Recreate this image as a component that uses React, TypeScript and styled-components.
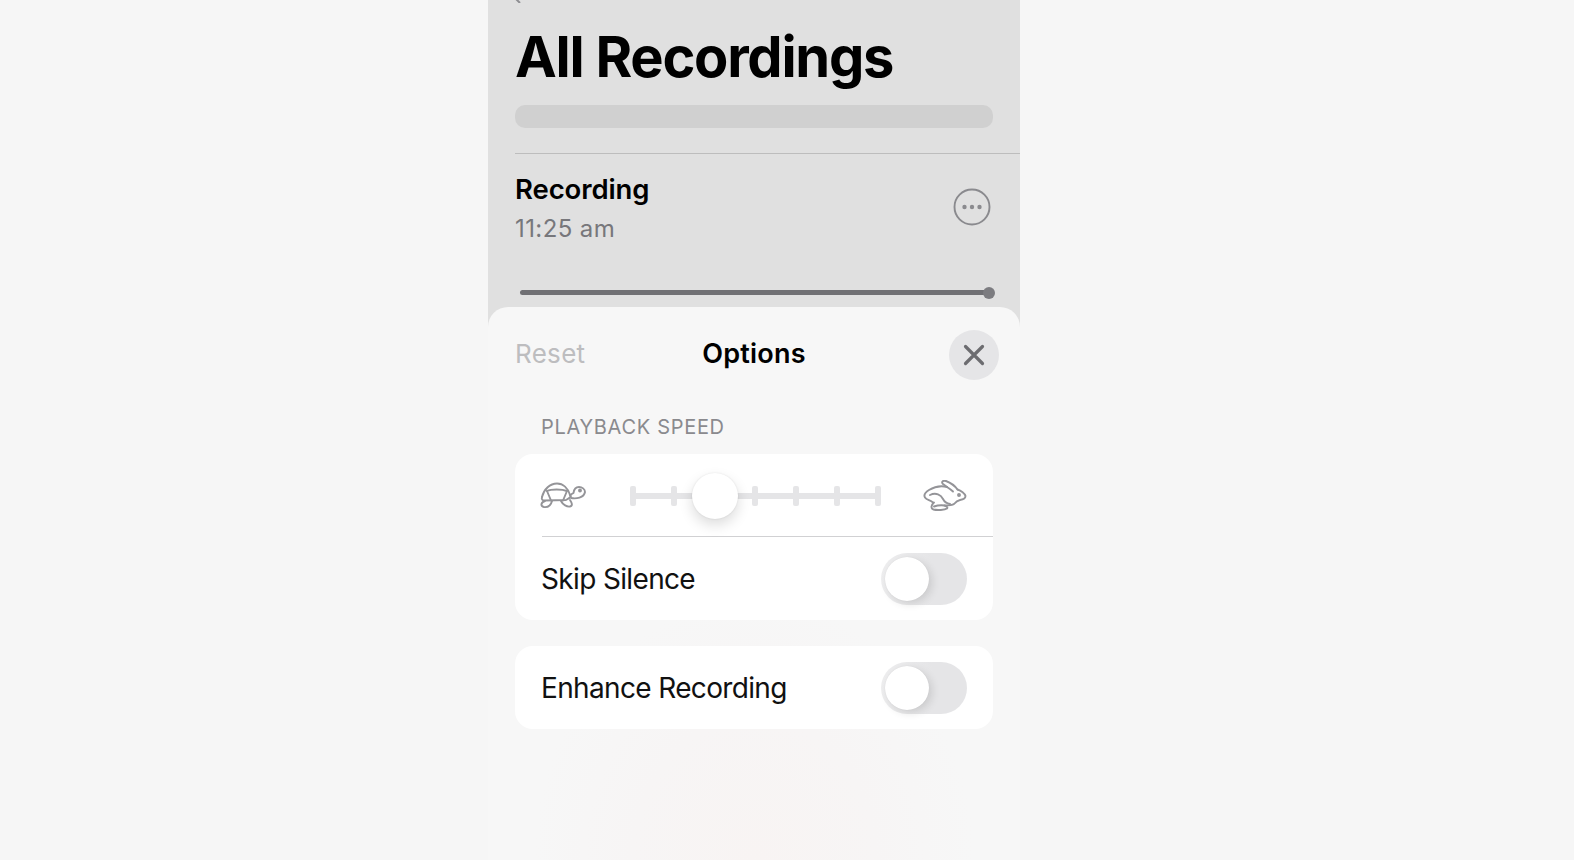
import styled, { createGlobalStyle } from 'styled-components'

const GlobalStyle = createGlobalStyle`
  html, body {
    margin: 0;
    padding: 0;
    background: #f6f6f6;
    font-family: Inter, "Liberation Sans", sans-serif;
  }
`

const TICKS = [0, 1, 2, 3, 4, 5, 6]

const Turtle = () => (
  <TurtleIcon width="48" height="27" viewBox="10 17 48 27" fill="none" stroke="#949498" strokeWidth="1.9" strokeLinecap="round" strokeLinejoin="round">
    <path d="M12 32C14 24 20 18.500 27 18.500c6 0 11 4.500 13 11.500" />
    <path d="M12 32c-1 3 1 3.500 3 3.500l21-.5c2-1 4-2 5-4" />
    <path d="M17 26c4-2 15-2 20 0" />
    <path d="M17 26l4 9.500M37 26l-4 9.500" />
    <path d="M41 33c5 1 13 0 14-6 0-3-3-5-6-5-3 0-5 2-5.500 6L40 30" />
    <circle cx="50" cy="25.500" r="1" fill="#949498" />
    <path d="M15 36c-4 1-5 5-1 6 4 .5 7-2 8-6" />
    <path d="M31 36c2 4 6 6 9 5.500 3-.5 2-3.500 0-6.500" />
  </TurtleIcon>
)

const Rabbit = () => (
  <RabbitIcon width="44" height="32" viewBox="13 16 44 32" fill="none" stroke="#949498" strokeWidth="1.9" strokeLinecap="round" strokeLinejoin="round">
    <path d="M37 23c-6-1.500-13 0-18 3-4 2.500-5.500 5-4 7.500 1.500 2.500 5 2.500 8 5" />
    <path d="M37 23l-4-3c-2-2 0-4 3-3 4 1.500 9 5 11.500 8.500" />
    <path d="M37 23c3 2 5 3.500 6 4.500" />
    <path d="M47.500 25.500c3.500 1 7.500 4 8 6.500 0 2.500-2.500 3.500-5.500 4-3 .5-4 1.500-6 4-2 1.500-6 1.500-9.500 1.500" />
    <path d="M20 31c6-3 11 0 13 4 1.500 3 4 4.500 7 5" />
    <path d="M24 38.500c-3 2.500-3.500 6-.5 7 3.500 1 11.500.5 13.500-1 1-1-.5-2.500-2.500-3-3.500-.5-7.500 0-10.500 1" />
    <circle cx="49" cy="31" r="1" fill="#949498" />
  </RabbitIcon>
)

const App = () => (
  <>
    <GlobalStyle />
    <Screen>
      <BackRow>
        <svg width="10" height="3" viewBox="0 0 10 3" fill="none" stroke="#8e8e92" strokeWidth="2">
          <path d="M6 -3L3 0l3 3" />
        </svg>
      </BackRow>
      <ListPane>
        <Title>All Recordings</Title>
        <SearchBar />
        <ListDivider />
        <RecordingRow>
          <div>
            <RecordingName>Recording</RecordingName>
            <RecordingTime>11:25 am</RecordingTime>
          </div>
          <MoreIcon width="38" height="38" viewBox="0 0 38 38" fill="none">
            <circle cx="19" cy="19" r="17.500" stroke="#8a8a8e" strokeWidth="1.900" />
            <circle cx="11.500" cy="19" r="2.200" fill="#8a8a8e" />
            <circle cx="19" cy="19" r="2.200" fill="#8a8a8e" />
            <circle cx="26.500" cy="19" r="2.200" fill="#8a8a8e" />
          </MoreIcon>
        </RecordingRow>
        <Progress>
          <ProgressKnob />
        </Progress>
      </ListPane>
      <Sheet>
        <SheetHeader>
          <ResetLabel>Reset</ResetLabel>
          <SheetTitle>Options</SheetTitle>
          <CloseButton aria-label="Close">
            <svg width="22" height="22" viewBox="0 0 22 22" fill="none" stroke="#6c6c70" strokeWidth="3.200" strokeLinecap="round">
              <path d="M2.500 2.500l17 17M19.500 2.500l-17 17" />
            </svg>
          </CloseButton>
        </SheetHeader>
        <SectionLabel>PLAYBACK SPEED</SectionLabel>
        <Card>
          <SpeedRow>
            <Turtle />
            <Slider>
              {TICKS.map((tick) => (
                <Tick key={tick} />
              ))}
              <SliderThumb />
            </Slider>
            <Rabbit />
          </SpeedRow>
          <OptionRow $divided>
            <OptionLabel>Skip Silence</OptionLabel>
            <Toggle>
              <ToggleThumb />
            </Toggle>
          </OptionRow>
        </Card>
        <Card $gap>
          <OptionRow>
            <OptionLabel>Enhance Recording</OptionLabel>
            <Toggle>
              <ToggleThumb />
            </Toggle>
          </OptionRow>
        </Card>
      </Sheet>
    </Screen>
  </>
)

export default App

const Screen = styled.div`
  width: 532px;
  height: 860px;
  margin-left: 488px;
  background: #e0e0e0;
  display: flex;
  flex-direction: column;
  overflow: hidden;
`

const BackRow = styled.div`
  height: 3px;
  padding-left: 26px;
  display: flex;
  svg {
    display: block;
  }
`

const ListPane = styled.div`
  height: 304px;
  padding-left: 27px;
  display: flex;
  flex-direction: column;
`

const Title = styled.h1`
  margin: 24px 0 0;
  font-size: 56px;
  line-height: 60px;
  font-weight: 700;
  letter-spacing: -1.25px;
  color: #000;
`

const SearchBar = styled.div`
  width: 478px;
  height: 23px;
  margin-top: 18px;
  border-radius: 10px;
  background: #d0d0d0;
`

const ListDivider = styled.div`
  height: 1px;
  margin-top: 25px;
  background: #bdbdbd;
`

const RecordingRow = styled.div`
  display: flex;
  justify-content: space-between;
  align-items: center;
  padding: 19px 29px 0 0;
`

const MoreIcon = styled.svg`
  margin-bottom: 3px;
`

const RecordingName = styled.div`
  font-size: 27.5px;
  line-height: 32px;
  font-weight: 600;
  letter-spacing: -0.1px;
  color: #000;
`

const RecordingTime = styled.div`
  margin-top: 9px;
  font-size: 24px;
  line-height: 30px;
  letter-spacing: 0.4px;
  color: #77777b;
`

const Progress = styled.div`
  position: relative;
  width: 470px;
  height: 5px;
  margin: 46px 0 0 5px;
  border-radius: 3px;
  background: #707074;
`

const ProgressKnob = styled.div`
  position: absolute;
  right: -5px;
  top: -3.5px;
  width: 12px;
  height: 12px;
  border-radius: 50%;
  background: #7c7c80;
`

const Sheet = styled.div`
  flex: 1;
  padding: 0 27px;
  border-radius: 20px 20px 0 0;
  background: radial-gradient(ellipse 220px 260px at 50% 100%, #f8f4f3 0%, #f7f5f5 55%, transparent 100%), #f7f7f7;
`

const SheetHeader = styled.div`
  display: grid;
  grid-template-columns: 1fr auto 1fr;
  align-items: center;
  height: 50px;
  margin: 23px -6px 0;
`

const ResetLabel = styled.span`
  margin-left: 6px;
  padding-bottom: 3px;
  font-size: 26px;
  letter-spacing: 0.3px;
  color: #bdbdbf;
`

const SheetTitle = styled.span`
  padding-bottom: 3px;
  font-size: 27px;
  font-weight: 600;
  letter-spacing: 0.2px;
  color: #000;
`

const CloseButton = styled.button`
  justify-self: end;
  width: 50px;
  height: 50px;
  padding: 0;
  border: none;
  border-radius: 50%;
  background: #e5e5e7;
  display: flex;
  align-items: center;
  justify-content: center;
`

const SectionLabel = styled.div`
  margin-top: 35px;
  padding-left: 26px;
  font-size: 20px;
  line-height: 24px;
  letter-spacing: 0.7px;
  color: #8a8a8e;
`

const Card = styled.div<{ $gap?: boolean }>`
  margin-top: ${(p) => (p.$gap ? '26px' : '15px')};
  border-radius: 18px;
  background: #fff;
  padding-left: 27px;
`

const SpeedRow = styled.div`
  height: 82px;
  padding-right: 26px;
  display: flex;
  align-items: center;
  justify-content: space-between;
`

const TurtleIcon = styled.svg`
  margin-left: -2px;
`

const RabbitIcon = styled.svg`
  margin-top: 2px;
`

const Slider = styled.div`
  position: relative;
  width: 251px;
  margin-top: 2px;
  display: flex;
  align-items: center;
  justify-content: space-between;
  &::before {
    content: '';
    position: absolute;
    left: 0;
    right: 0;
    top: 7px;
    height: 6px;
    background: #e5e5e7;
  }
`

const Tick = styled.div`
  position: relative;
  width: 6px;
  height: 20px;
  border-radius: 2px;
  background: #e5e5e7;
`

const SliderThumb = styled.div`
  position: absolute;
  left: 62px;
  top: -13px;
  width: 46px;
  height: 46px;
  border-radius: 50%;
  background: #fff;
  box-shadow: 0 6px 14px rgba(0, 0, 0, 0.14), 0 0 2px rgba(0, 0, 0, 0.1);
`

const OptionRow = styled.div<{ $divided?: boolean }>`
  height: 83px;
  padding-right: 26px;
  display: flex;
  align-items: center;
  justify-content: space-between;
  border-top: ${(p) => (p.$divided ? '1px solid #d1d1d3' : 'none')};
`

const OptionLabel = styled.span`
  margin-left: -1px;
  font-size: 28px;
  letter-spacing: -0.65px;
  color: #111;
`

const Toggle = styled.div`
  width: 86px;
  height: 52px;
  padding: 4px;
  box-sizing: border-box;
  border-radius: 26px;
  background: linear-gradient(90deg, #eeeeef 0%, #e5e5e7 60%);
  display: flex;
  align-items: center;
`

const ToggleThumb = styled.div`
  width: 44px;
  height: 44px;
  border-radius: 50%;
  background: #fff;
  box-shadow: 3px 3px 8px rgba(0, 0, 0, 0.12), 0 0 1px rgba(0, 0, 0, 0.1);
`
